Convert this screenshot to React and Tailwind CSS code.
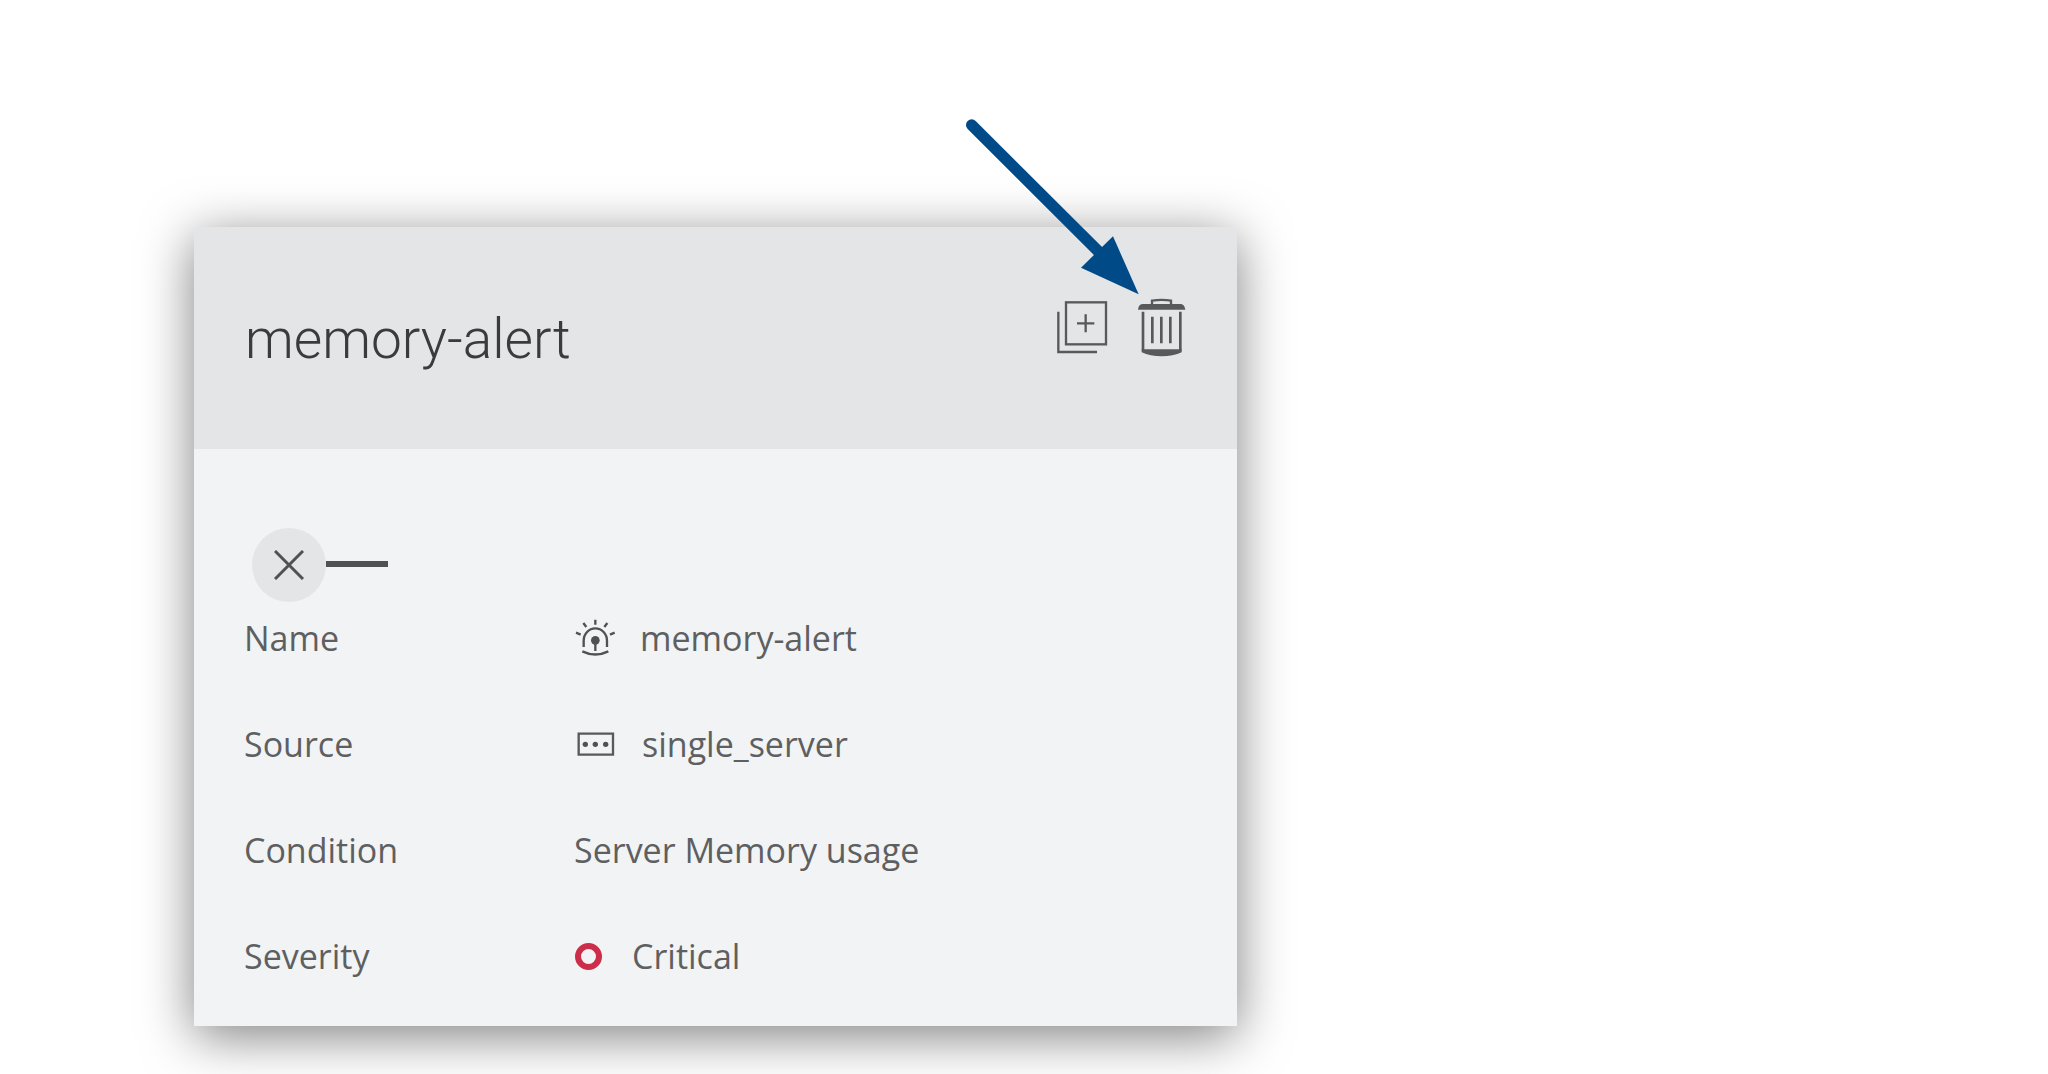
import React, { useState } from "react";

function DuplicateIcon() {
  return (
    <svg width="51" height="54" viewBox="81 60 153 162" fill="none" stroke="#58595b" aria-hidden="true">
      <rect x="108" y="67" width="120" height="126" strokeWidth="7" />
      <path d="M85 95V216H201" strokeWidth="7" />
      <path d="M141 130H193M167 103V157" strokeWidth="7" />
    </svg>
  );
}

function TrashIcon() {
  return (
    <svg width="49" height="59" viewBox="321 54 147 177" fill="none" stroke="#58595b" aria-hidden="true">
      <path d="M366 74V62Q395 57 423 62V74" strokeWidth="7" />
      <path d="M324 89Q326 73 337 72H453Q463 73 466 89Z" fill="#58595b" stroke="none" />
      <path d="M339 95V212M451 95V212" strokeWidth="8" />
      <path d="M335 208H455V217Q430 229 395 229Q360 229 335 217Z" fill="#58595b" stroke="none" />
      <path d="M367 110V190M394 110V190M421 110V190" strokeWidth="8" />
    </svg>
  );
}

function AlarmIcon() {
  return (
    <svg width="41" height="38" viewBox="46 63 123 114" fill="none" stroke="#505153" strokeWidth="7" aria-hidden="true">
      <path d="M72 147V128A35 37 0 0 1 142 128V147" />
      <path d="M68 160Q107 179 146 160" />
      <path d="M107 128V159" />
      <circle cx="107" cy="127" r="13" fill="#505153" stroke="none" />
      <path d="M107 65V80M71 75L80 87M143 75L134 87M49 104L63 110M165 104L151 110" />
    </svg>
  );
}

function ServerIcon() {
  return (
    <svg width="38" height="24" viewBox="50 403 114 72" fill="#505153" aria-hidden="true">
      <path d="M55 408H158V471H55Z" fill="none" stroke="#58595b" strokeWidth="7" />
      <circle cx="75" cy="440" r="8" />
      <circle cx="105" cy="440" r="8" />
      <circle cx="136" cy="440" r="8" />
    </svg>
  );
}

function Arrow() {
  return (
    <svg
      className="pointer-events-none absolute right-[47px] bottom-full mb-[3px] max-w-none"
      width="174"
      height="177"
      viewBox="75 53 522 531"
      aria-hidden="true"
    >
      <path d="M95 74L490 468" stroke="#004b87" strokeWidth="34" strokeLinecap="round" />
      <path d="M519 408L596 582L423 502Z" fill="#004b87" />
    </svg>
  );
}

function Row({ label, children }) {
  return (
    <div className="flex items-center">
      <dt className="w-[330px] shrink-0">{label}</dt>
      <dd className="flex items-center">{children}</dd>
    </div>
  );
}

export default function App() {
  const [enabled, setEnabled] = useState(false);
  return (
    <main className="min-h-screen bg-white px-[194px] pt-[227px] pb-12 font-['Open_Sans',sans-serif] text-[#5e5f61]">
      <article className="w-full max-w-[1043px] rounded-t-[4px] bg-[#f1f3f5] shadow-[0_10px_52px_rgba(0,0,0,0.5)]">
        <header className="flex items-start justify-between rounded-t-[4px] bg-[#e4e5e7] pt-[71px] pr-[51px] pb-[71px] pl-[51px]">
          <h1 className="pt-[2px] font-['Roboto',sans-serif] text-[55px] leading-[78px] font-[350] text-[#3a3b3d]">
            memory-alert
          </h1>
          <div className="flex items-start gap-[29px]">
            <button type="button" aria-label="Duplicate alert" className="pt-[2px]">
              <DuplicateIcon />
            </button>
            <button type="button" aria-label="Delete alert" className="relative">
              <TrashIcon />
              <Arrow />
            </button>
          </div>
        </header>
        <div className="px-[50px] pt-[79px] pb-[46px]">
          <button
            type="button"
            role="switch"
            aria-checked={enabled}
            aria-label="Alert enabled"
            onClick={() => setEnabled(!enabled)}
            className="ml-2 flex items-center"
          >
            <span className="flex size-[74px] items-center justify-center rounded-full bg-[#e4e5e7]">
              <svg width="30" height="30" viewBox="0 0 30 30" stroke="#505153" strokeWidth="3" aria-hidden="true">
                <path d="M1 1L29 29M29 1L1 29" />
              </svg>
            </span>
            <span className="mb-[2px] h-[6px] w-[62px] bg-[#505153]" />
          </button>
          <dl className="mt-3 flex flex-col gap-[58px] text-[34px] leading-[48px] font-[450]">
            <Row label="Name">
              <span className="mr-6 ml-px">
                <AlarmIcon />
              </span>
              memory-alert
            </Row>
            <Row label="Source">
              <span className="mr-[27px] ml-[3px]">
                <ServerIcon />
              </span>
              single_server
            </Row>
            <Row label="Condition">Server Memory usage</Row>
            <Row label="Severity">
              <span className="mr-[30px] ml-px size-[27px] rounded-full border-[6px] border-[#cc2d48]" />
              Critical
            </Row>
          </dl>
        </div>
      </article>
    </main>
  );
}
